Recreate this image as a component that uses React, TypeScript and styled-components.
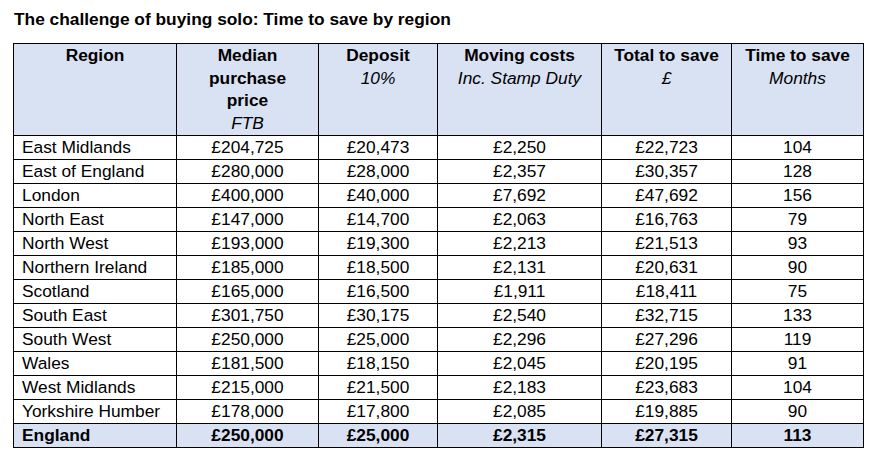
import styled, { createGlobalStyle } from 'styled-components';

const GlobalStyle = createGlobalStyle`
  body {
    margin: 0;
    background: #ffffff;
    font-family: 'Liberation Sans', Arial, sans-serif;
    color: #000000;
  }
`;

const Page = styled.div`
  padding: 9px 0 0 13px;
`;

const Title = styled.h1`
  margin: 0 0 14px 1px;
  font-size: 17.33px;
  font-weight: bold;
  line-height: 20px;
`;

const Table = styled.table`
  width: 850px;
  table-layout: fixed;
  border-collapse: collapse;
  font-size: 17.33px;
`;

const HeadCell = styled.th`
  background: #d9e2f3;
  border: 1px solid #000;
  padding: 0 10px 1px;
  vertical-align: top;
  text-align: center;
  font-weight: bold;
  line-height: 22.6px;
`;

const Sub = styled.span`
  display: block;
  font-style: italic;
  font-weight: normal;
`;

const Row = styled.tr<{ $total?: boolean }>`
  background: ${(p) => (p.$total ? '#d9e2f3' : '#ffffff')};
  font-weight: ${(p) => (p.$total ? 'bold' : 'normal')};
`;

const Cell = styled.td<{ $left?: boolean }>`
  border: 1px solid #000;
  padding: 0 8px;
  height: 23px;
  line-height: 23px;
  text-align: ${(p) => (p.$left ? 'left' : 'center')};
  white-space: nowrap;
`;

const columns = [163, 142, 119, 164, 130, 132];

const headers: { title: string; sub?: string }[] = [
  { title: 'Region' },
  { title: 'Median purchase price', sub: 'FTB' },
  { title: 'Deposit', sub: '10%' },
  { title: 'Moving costs', sub: 'Inc. Stamp Duty' },
  { title: 'Total to save', sub: '£' },
  { title: 'Time to save', sub: 'Months' },
];

const rows: string[][] = [
  ['East Midlands', '£204,725', '£20,473', '£2,250', '£22,723', '104'],
  ['East of England', '£280,000', '£28,000', '£2,357', '£30,357', '128'],
  ['London', '£400,000', '£40,000', '£7,692', '£47,692', '156'],
  ['North East', '£147,000', '£14,700', '£2,063', '£16,763', '79'],
  ['North West', '£193,000', '£19,300', '£2,213', '£21,513', '93'],
  ['Northern Ireland', '£185,000', '£18,500', '£2,131', '£20,631', '90'],
  ['Scotland', '£165,000', '£16,500', '£1,911', '£18,411', '75'],
  ['South East', '£301,750', '£30,175', '£2,540', '£32,715', '133'],
  ['South West', '£250,000', '£25,000', '£2,296', '£27,296', '119'],
  ['Wales', '£181,500', '£18,150', '£2,045', '£20,195', '91'],
  ['West Midlands', '£215,000', '£21,500', '£2,183', '£23,683', '104'],
  ['Yorkshire Humber', '£178,000', '£17,800', '£2,085', '£19,885', '90'],
];

const total = ['England', '£250,000', '£25,000', '£2,315', '£27,315', '113'];

export default function App() {
  return (
    <Page>
      <GlobalStyle />
      <Title>The challenge of buying solo: Time to save by region</Title>
      <Table>
        <colgroup>
          {columns.map((w, i) => (
            <col key={i} style={{ width: w }} />
          ))}
        </colgroup>
        <thead>
          <tr>
            {headers.map((h) => (
              <HeadCell key={h.title}>
                {h.title}
                {h.sub && <Sub>{h.sub}</Sub>}
              </HeadCell>
            ))}
          </tr>
        </thead>
        <tbody>
          {rows.map((r) => (
            <Row key={r[0]}>
              {r.map((v, i) => (
                <Cell key={i} $left={i === 0}>
                  {v}
                </Cell>
              ))}
            </Row>
          ))}
          <Row $total>
            {total.map((v, i) => (
              <Cell key={i} $left={i === 0}>
                {v}
              </Cell>
            ))}
          </Row>
        </tbody>
      </Table>
    </Page>
  );
}
